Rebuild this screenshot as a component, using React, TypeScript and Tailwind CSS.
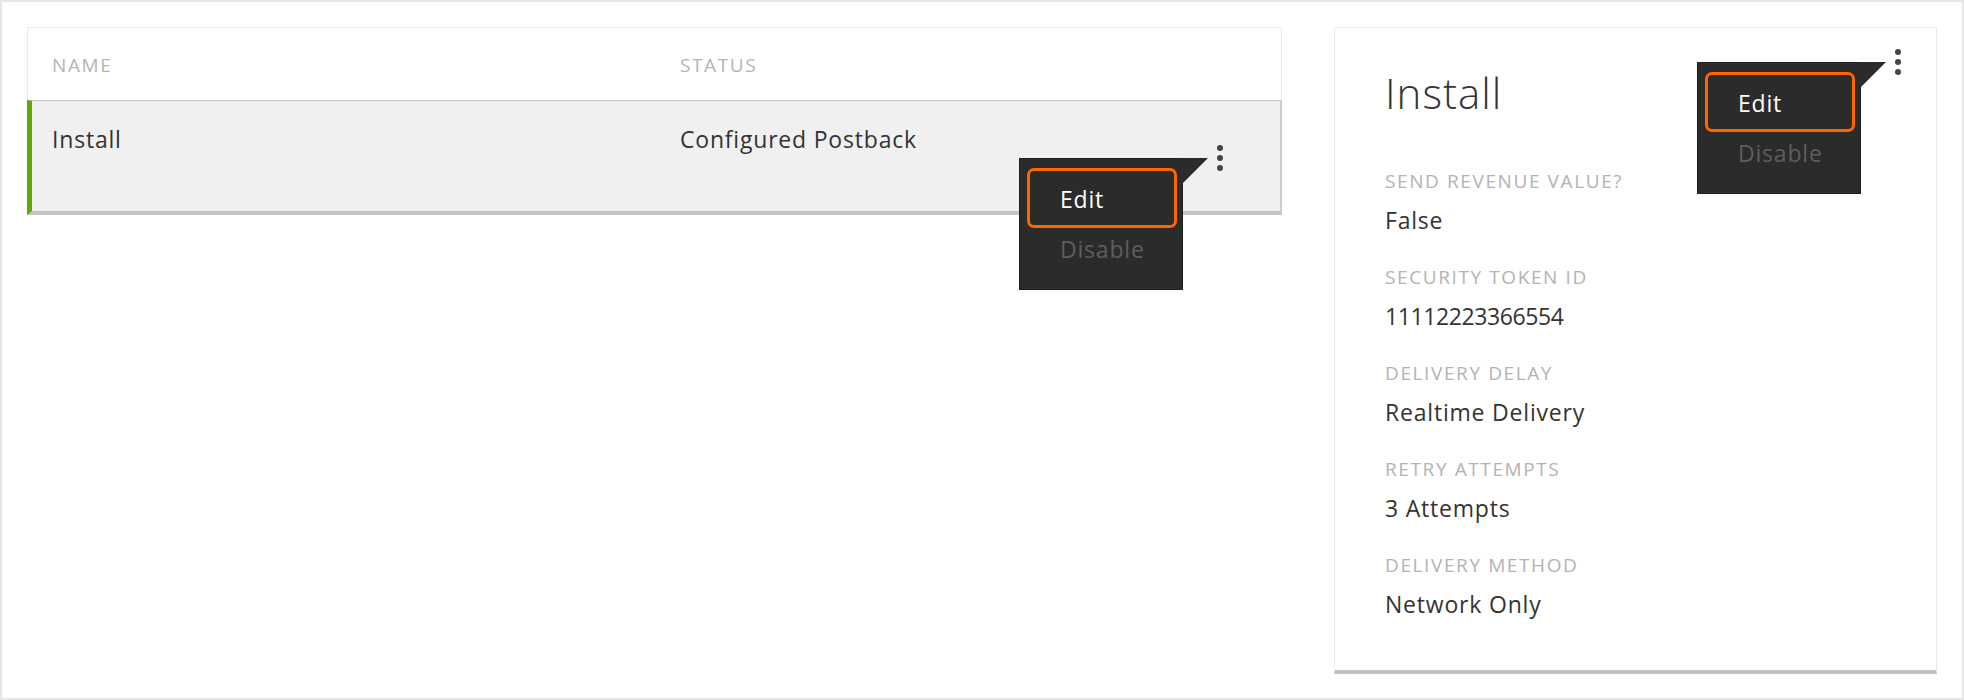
import React from "react";

function Kebab({ className }: { className: string }) {
  return (
    <svg className={className} width="6" height="26" viewBox="0 0 6 26">
      <circle cx="3" cy="3" r="3" fill="#444444" />
      <circle cx="3" cy="13" r="3" fill="#444444" />
      <circle cx="3" cy="23" r="3" fill="#444444" />
    </svg>
  );
}

function Menu({ className }: { className: string }) {
  return (
    <div
      className={`absolute z-10 w-[164px] h-[132px] bg-[#2b2b2b] border border-[#1f1f1f] pt-[9px] pl-[7px] ${className}`}
    >
      <svg className="absolute left-[162px] top-[-1px]" width="26" height="26" viewBox="0 0 26 26">
        <polygon points="0,0 26,0 0,26" fill="#2b2b2b" />
      </svg>
      <div className="w-[150px] h-[60px] border-[3px] border-[#ff6600] rounded-[7px] pt-[13px] pl-[30px] text-white text-[23px] leading-[30px] tracking-[0.8px]">
        Edit
      </div>
      <div className="mt-[6px] pl-[33px] text-[#5e5e5e] text-[23px] leading-[30px] tracking-[0.8px]">
        Disable
      </div>
    </div>
  );
}

const details = [
  { label: "SEND REVENUE VALUE?", value: "False", numeric: false },
  { label: "SECURITY TOKEN ID", value: "11112223366554", numeric: true },
  { label: "DELIVERY DELAY", value: "Realtime Delivery", numeric: false },
  { label: "RETRY ATTEMPTS", value: "3 Attempts", numeric: false },
  { label: "DELIVERY METHOD", value: "Network Only", numeric: false },
];

export default function App() {
  return (
    <div className="w-[1964px] h-[700px] bg-white border-2 border-[#e6e6e6] p-[25px] flex items-start gap-[52px] font-['Open_Sans','DejaVu_Sans',sans-serif] text-[#333333]">
      {/* Table */}
      <div className="flex-1 flex flex-col">
        <div className="h-[73px] border border-b-0 border-[#ebebeb] pt-[25px] pl-[24px] flex text-[19px] leading-[24px] tracking-[1.6px] text-[#b5b5b5]">
          <div className="w-[628px]">NAME</div>
          <div>STATUS</div>
        </div>
        <div className="relative h-[115px] bg-[#f0f0f0] border-l-[5px] border-l-[#5fa800] border-t border-t-[#c4c4c4] border-r-2 border-r-[#cdcdcd] border-b-4 border-b-[#c4c4c4] pt-[23px] pl-[20px] flex text-[23px] leading-[30px] tracking-[0.8px]">
          <div className="w-[628px]">Install</div>
          <div>Configured Postback</div>
          <Kebab className="absolute left-[1185px] top-[44px]" />
          <Menu className="left-[987px] top-[57px]" />
        </div>
      </div>

      {/* Detail card */}
      <div className="relative w-[603px] bg-white border border-[#ebebeb] border-b-4 border-b-[#c4c4c4] pt-[40px] pl-[50px] pb-[51px]">
        <div className="text-[42px] leading-[50px] font-light tracking-[1px] text-[#333333]">Install</div>
        <div className="mt-[51px] flex flex-col gap-[30px]">
          {details.map((d) => (
            <div key={d.label} className="flex flex-col">
              <div className="text-[19px] leading-[24px] tracking-[1.6px] text-[#b3b3b3]">{d.label}</div>
              <div
                className={
                  d.numeric
                    ? "mt-[12px] text-[23px] leading-[30px] tracking-[-0.4px] text-[#333333]"
                    : "mt-[12px] text-[23px] leading-[30px] tracking-[0.8px] text-[#333333]"
                }
              >
                {d.value}
              </div>
            </div>
          ))}
        </div>
        <Kebab className="absolute left-[560px] top-[21px]" />
        <Menu className="left-[362px] top-[34px]" />
      </div>
    </div>
  );
}
